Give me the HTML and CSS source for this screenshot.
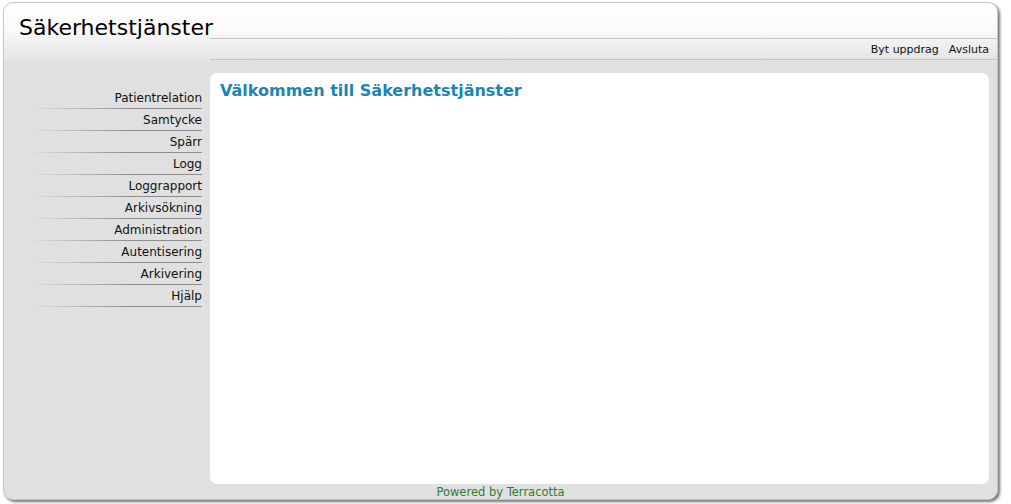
FILE: index.html
```html
<!DOCTYPE html>
<html lang="sv">
<head>
  <meta charset="UTF-8">
  <title>Säkerhetstjänster</title>
  <link rel="stylesheet" href="styles.css">
</head>
<body>
  <div class="page">
    <div class="header">
      <div class="title">Säkerhetstjänster</div>
      <div class="topbar">
        <a href="#">Byt uppdrag</a>
        <a href="#">Avsluta</a>
      </div>
    </div>

    <div class="main">
      <ul class="menu">
        <li><a href="#">Patientrelation</a></li>
        <li><a href="#">Samtycke</a></li>
        <li><a href="#">Spärr</a></li>
        <li><a href="#">Logg</a></li>
        <li><a href="#">Loggrapport</a></li>
        <li><a href="#">Arkivsökning</a></li>
        <li><a href="#">Administration</a></li>
        <li><a href="#">Autentisering</a></li>
        <li><a href="#">Arkivering</a></li>
        <li><a href="#">Hjälp</a></li>
      </ul>

      <div class="content">
        <h1>Välkommen till Säkerhetstjänster</h1>
      </div>
    </div>

    <div class="footer">Powered by Terracotta</div>
  </div>
</body>
</html>
```

FILE: styles.css
```css
html, body {
  margin: 0;
  padding: 0;
  background: #fff;
}

body {
  font-family: "DejaVu Sans", Verdana, sans-serif;
  font-size: 11px;
  color: #111;
  padding: 2px 13px 4px 3px;
}

a {
  color: #111;
  text-decoration: none;
}

.page {
  height: 498px;
  box-sizing: border-box;
  background: #e0e0e0;
  border: 1px solid #c8c8c8;
  border-radius: 10px;
  box-shadow: 2px 2px 3px rgba(0, 0, 0, 0.55);
  display: flex;
  flex-direction: column;
  overflow: hidden;
}

.header {
  height: 59px;
  background: linear-gradient(#ffffff 0%, #fafafa 45%, #e2e2e2 100%);
  display: flex;
  flex-direction: column;
}

.title {
  font-size: 22px;
  padding: 12px 0 0 15px;
  height: 23px;
  color: #000;
}

.topbar {
  margin-left: 206px;
  height: 20px;
  border-top: 1px solid #c4c4c4;
  border-bottom: 1px solid #c4c4c4;
  display: flex;
  justify-content: flex-end;
  align-items: center;
  gap: 10px;
  padding-right: 8px;
}

.main {
  flex: 1;
  display: flex;
  padding-top: 11px;
}

.menu {
  list-style: none;
  margin: 14px 0 0 26px;
  padding: 0;
  width: 172px;
  font-size: 12px;
}

.menu li {
  height: 21px;
  border-bottom: 1px solid transparent;
  border-image: linear-gradient(to right, rgba(140, 140, 140, 0), #8c8c8c 60%) 1;
  text-align: right;
  line-height: 22px;
}

.content {
  flex: 1;
  margin: 0 8px 0 8px;
  background: #fff;
  border-radius: 7px;
  padding: 8px 10px;
}

.content h1 {
  margin: 0;
  font-size: 16px;
  font-weight: bold;
  color: #1a86b4;
}

.footer {
  height: 13px;
  line-height: 13px;
  padding-top: 2px;
  text-align: center;
  color: #2e7d2e;
  font-size: 11.5px;
}
```
